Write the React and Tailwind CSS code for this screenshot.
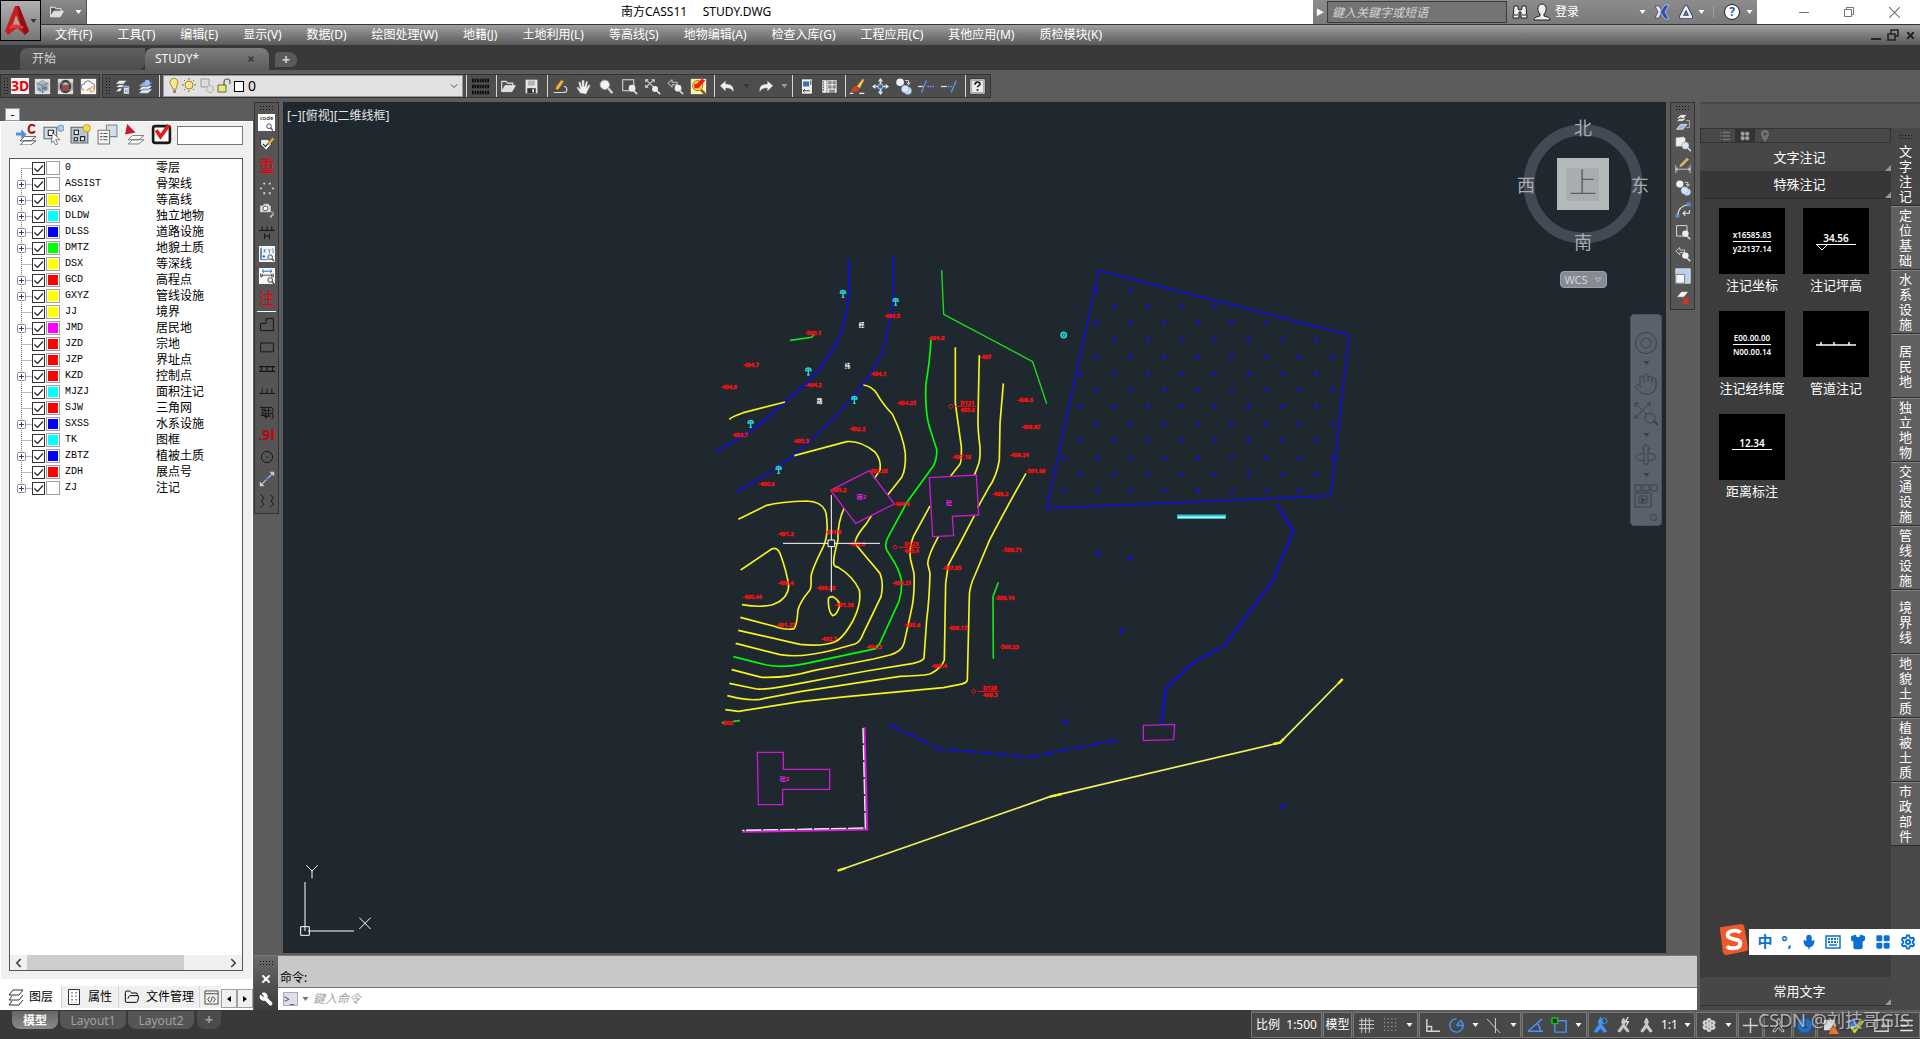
import React from 'react';
import clsx from 'clsx';
import {
  ChevronDown,
  ChevronLeft,
  ChevronRight,
  FolderOpen,
  Hand,
  LayoutGrid,
  List,
  MapPin,
  Menu,
  Mic,
  Settings,
  Shirt,
  Wrench,
  X,
} from 'lucide-react';

const menus = [
  '文件(F)', '工具(T)', '编辑(E)', '显示(V)', '数据(D)', '绘图处理(W)', '地籍(J)', '土地利用(L)',
  '等高线(S)', '地物编辑(A)', '检查入库(G)', '工程应用(C)', '其他应用(M)', '质检模块(K)',
];

const layers = [
  { code: '0', name: '零层', color: '#ffffff', open: false },
  { code: 'ASSIST', name: '骨架线', color: '#ffffff', open: true },
  { code: 'DGX', name: '等高线', color: '#ffff00', open: true },
  { code: 'DLDW', name: '独立地物', color: '#00ffff', open: true },
  { code: 'DLSS', name: '道路设施', color: '#0000ff', open: true },
  { code: 'DMTZ', name: '地貌土质', color: '#00ff00', open: true },
  { code: 'DSX', name: '等深线', color: '#ffff00', open: false },
  { code: 'GCD', name: '高程点', color: '#ff0000', open: true },
  { code: 'GXYZ', name: '管线设施', color: '#ffff00', open: true },
  { code: 'JJ', name: '境界', color: '#ffff00', open: false },
  { code: 'JMD', name: '居民地', color: '#ff00ff', open: true },
  { code: 'JZD', name: '宗地', color: '#ff0000', open: false },
  { code: 'JZP', name: '界址点', color: '#ff0000', open: false },
  { code: 'KZD', name: '控制点', color: '#ff0000', open: true },
  { code: 'MJZJ', name: '面积注记', color: '#00ffff', open: false },
  { code: 'SJW', name: '三角网', color: '#ff0000', open: false },
  { code: 'SXSS', name: '水系设施', color: '#0000ff', open: true },
  { code: 'TK', name: '图框', color: '#00ffff', open: false },
  { code: 'ZBTZ', name: '植被土质', color: '#0000ff', open: true },
  { code: 'ZDH', name: '展点号', color: '#ff0000', open: false },
  { code: 'ZJ', name: '注记', color: '#ffffff', open: true },
];

const paletteTabs = [
  '文字注记', '定位基础', '水系设施', '居民地', '独立地物', '交通设施',
  '管线设施', '境界线', '地貌土质', '植被土质', '市政部件',
];

// All drawings use a 20 x 20 box
const icons = {
  folder: (
    <>
      <path d="M2 16V4h5l2 2h6v3" fill="#555" stroke="#e8e8e8" strokeWidth="1.3" />
      <path d="M2 16L6 9h12l-4 7z" fill="#ddd" stroke="#eee" />
    </>
  ),
  save: (
    <>
      <path d="M3 2h14v16H3z" fill="#e6e6e6" />
      <path d="M6 3h8v6H6z" fill="#b5b5b5" />
      <path d="M5 12h10v6H5z" fill="#333" />
      <path d="M11 13h2v4h-2z" fill="#eee" />
    </>
  ),
  cube: (
    <>
      <path d="M1 1h18v18H1z" fill="#dde0e2" />
      <path d="M3 6l7-4 7 4v8l-7 4-7-4z" fill="#a9b6bd" />
      <path d="M3 6l7 3 7-3M10 9v9" stroke="#67757d" fill="none" />
      <path d="M5 11l3 2v3l-3-2z" fill="#4f93b7" />
      <circle cx="13" cy="12" r="2.5" fill="#738086" />
    </>
  ),
  scan: (
    <>
      <path d="M1 1h18v18H1z" fill="#dedede" />
      <ellipse cx="10" cy="10" rx="7" ry="8" fill="#444" />
      <path d="M2 6h16v8H2z" fill="none" stroke="#8d8d8d" />
      <path d="M6 8h8v6H6z" fill="#a8444c" />
      <path d="M6 8l4-3 4 3z" fill="#ccc" />
    </>
  ),
  cloud: (
    <>
      <path d="M1 1h18v18H1z" fill="#f8f8f8" />
      <path d="M5 14a3.500 3.500 0 0 1 0-7 4.500 4.500 0 0 1 8.500-1A4 4 0 0 1 16 13" fill="none" stroke="#888" strokeWidth="1.200" />
      <path d="M16 10c-3 1-5 3-4 6 3 1 6-1 5-4M11 12l-3 3" fill="none" stroke="#f0944a" strokeWidth="1.300" />
    </>
  ),
  layerProps: (
    <>
      <path d="M6 3h9l-4 4H2zM6 8h8l-4 3H2zM6 12h4l-3 4H2z" fill="#f3f3f3" stroke="#444" strokeWidth=".5" />
      <path d="M11 9h7v10h-7z" fill="#dbe6f5" stroke="#555" />
      <path d="M12 11h5M13 14h1M15 14h1M13 16h1M15 16h1" stroke="#4570b0" strokeWidth="1.200" />
    </>
  ),
  layerStack: (
    <>
      <path d="M7 13h11l-5 5H2zM7 9h11l-5 5H2z" fill="#eee" stroke="#4d678a" strokeWidth=".7" />
      <path d="M7 5h11l-5 5H2z" fill="#8fb0e4" stroke="#4d678a" strokeWidth=".7" />
      <circle cx="12" cy="5" r="3" fill="#9dc0f0" />
    </>
  ),
  linetype: (
    <path d="M0 3h20M0 10h20M0 17h20" stroke="#0a0a0a" strokeWidth="4" strokeDasharray="2 1" />
  ),
  pencil: (
    <>
      <path d="M2 17h12a3 3 0 0 0 0-7" fill="none" stroke="#ddd" strokeWidth="1.300" />
      <path d="M3 16l2-6 6-8 3 2-6 9z" fill="#f2b33c" stroke="#7a5210" strokeWidth=".6" />
      <path d="M3 16l1-3 2 1z" fill="#222" />
    </>
  ),
  hand: (
    <path d="M6 18c-1-3-4-5-4-7 1-1 3 0 4 2L4 5c1-1 2-1 3 1l1 4V3c1-1 2-1 3 0v7l2-6c1-1 2 0 2 1l-1 6 2-3c1 0 2 0 2 1l-3 6c-1 2-1 3-2 4z" fill="#efefef" stroke="#555" strokeWidth=".5" />
  ),
  zoom: (
    <>
      <path d="M12 12l5 6" stroke="#ccc" strokeWidth="3" />
      <circle cx="8" cy="8" r="5.500" fill="#f2f2f2" stroke="#aaa" />
    </>
  ),
  zoomWin: (
    <>
      <path d="M2 2h13v13H2z" fill="none" stroke="#ddd" strokeWidth="1.200" />
      <circle cx="13" cy="12" r="4" fill="#eee" />
      <path d="M15 15l4 4" stroke="#ddd" strokeWidth="2" />
    </>
  ),
  zoomExt: (
    <>
      <path d="M2 2l10 9M12 2L2 11M2 5V2h3M12 5V2H9M2 8v3h3" fill="none" stroke="#ddd" strokeWidth="1.200" />
      <circle cx="13" cy="13" r="3.500" fill="#eee" />
      <path d="M15 15l4 4" stroke="#ddd" strokeWidth="2" />
    </>
  ),
  zoomPrev: (
    <>
      <path d="M1 6l5-4v3h6v3H6v3z" fill="#555" stroke="#ddd" />
      <circle cx="13" cy="12" r="4" fill="#eee" />
      <path d="M15 15l4 4" stroke="#ddd" strokeWidth="2" />
    </>
  ),
  zoomHot: (
    <>
      <path d="M1 1h18v18H1z" fill="#fbf0c8" />
      <circle cx="9" cy="9" r="6" fill="#ffe51a" stroke="#8a6a00" />
      <path d="M13 14l5 5" stroke="#8a5a10" strokeWidth="3" />
      <path d="M5 9l9-8 4 2-8 9z" fill="#f01d1d" />
      <path d="M5 6v6h6z" fill="#f01d1d" />
    </>
  ),
  undo: <path d="M1 9l7-6v4c7 0 10 3 9 10-2-4-4-5-9-5v4z" fill="#eee" stroke="#444" strokeWidth=".5" />,
  redo: <path d="M19 9l-7-6v4C5 7 2 10 3 17c2-4 4-5 9-5v4z" fill="#eee" stroke="#444" strokeWidth=".5" />,
  page: (
    <>
      <path d="M4 1h13v18H4z" fill="#f2f2f2" stroke="#333" />
      <path d="M6 4h7v6H6z" fill="#3f6fb4" />
      <path d="M6 15h8M6 15l2-2M6 15l2 2" stroke="#222" fill="none" />
      <path d="M15 3v5" stroke="#222" />
    </>
  ),
  sheet: (
    <>
      <path d="M1 2h18v16H1z" fill="#eee" stroke="#333" />
      <path d="M3 4v12M7 2v16" stroke="#555" strokeDasharray="2 1" />
      <path d="M9 4h3v3H9zM14 4h3v3h-3zM9 9h3v3H9zM14 9h3v3h-3zM10 14h6v3h-6z" fill="#999" stroke="#444" strokeWidth=".5" />
    </>
  ),
  brush: (
    <>
      <path d="M9 10l7-9 2 1-5 10z" fill="#f7c64a" stroke="#8b5c14" strokeWidth=".5" />
      <path d="M3 16c0-4 3-7 6-6l3 3c-1 3-5 4-9 3z" fill="#d14022" />
      <path d="M1 18h4M12 18h6" stroke="#eee" strokeWidth="1.500" />
    </>
  ),
  move: (
    <>
      <path d="M10 0l3 4H7zM10 20l3-4H7zM0 10l4-3v6zM20 10l-4-3v6z" fill="#eaeaea" />
      <path d="M10 4v3M10 13v3M4 10h3M13 10h3" stroke="#eaeaea" strokeWidth="2" />
      <path d="M7.500 7.500h5v5h-5z" fill="#2e69b5" stroke="#9cc2ff" />
    </>
  ),
  copy: (
    <>
      <circle cx="6" cy="5" r="4.500" fill="#f3f3f3" />
      <circle cx="15" cy="15" r="4.500" fill="#cfe3fa" stroke="#6a96cd" strokeWidth=".6" />
      <circle cx="12" cy="13" r="4.500" fill="#d8e7fa" stroke="#6a96cd" strokeWidth=".6" />
      <path d="M12 3h4v4M14 5l2 3 2-3" fill="none" stroke="#eee" />
    </>
  ),
  trim: (
    <>
      <path d="M0 10h6" stroke="#ddd" strokeWidth="1.500" />
      <path d="M4 17L10 3" stroke="#5b97ee" strokeWidth="1.500" />
      <path d="M11 10h9" stroke="#5b97ee" strokeWidth="1.500" strokeDasharray="2 1" />
    </>
  ),
  extend: (
    <>
      <path d="M0 10h7" stroke="#ddd" strokeWidth="1.500" />
      <path d="M8 10h5" stroke="#5b97ee" strokeWidth="1.500" strokeDasharray="2 1" />
      <path d="M12 17l6-14" stroke="#5b97ee" strokeWidth="1.500" />
    </>
  ),
  help: (
    <>
      <path d="M1 1h18v18H1z" fill="#eee" stroke="#222" />
      <path d="M3 3h14v14H3z" fill="none" stroke="#999" />
      <path d="M7 8c0-4 6-4 6-1 0 2-3 2-3 4M10 13v2" stroke="#222" strokeWidth="2" fill="none" />
    </>
  ),
  lens: (
    <>
      <circle cx="10" cy="8" r="6" fill="#e4f0ff" stroke="#345" strokeWidth="2" />
      <path d="M14 12l6 7" stroke="#345" strokeWidth="3" />
    </>
  ),
  tagEdit: (
    <>
      <path d="M2 4h9l5 6-7 8-7-7z" fill="#eee" stroke="#222" />
      <path d="M5 10l3 3 5-5" stroke="#333" fill="none" strokeWidth="1.500" />
      <path d="M11 9l6-7 2 2-6 7z" fill="#f3b33a" stroke="#7a5210" strokeWidth=".5" />
    </>
  ),
  dots: (
    <path d="M5 3h3v3H5zM12 3h3v3h-3zM1 9h3v3H1zM16 9h3v3h-3zM5 15h3v3H5zM12 15h3v3h-3z" fill="#ddd" stroke="#444" strokeWidth=".6" />
  ),
  camera: (
    <>
      <path d="M1 4h4l1-2h6l1 2h2v9H1z" fill="#ddd" stroke="#333" strokeWidth=".6" />
      <circle cx="8" cy="8" r="3" fill="#fff" stroke="#333" />
      <path d="M15 12c4 0 4 6-1 6M16 16l-2 2 2 2" fill="none" stroke="#ddd" strokeWidth="1.200" />
    </>
  ),
  wires: <path d="M0 8h20M4 3v5M10 3v5M16 3v5M7 12v7M13 12v7M7 15h6" stroke="#111" strokeWidth="1.200" fill="none" />,
  xyFind: (
    <>
      <path d="M0 0h20v20H0z" fill="#f7f7f7" />
      <path d="M2 3v14h9M3 17V2M6 4l2 4M8 4L6 8M11 4l2 2 2-2M13 6v3M17 3l1 3-1 3" stroke="#2568b8" fill="none" />
      <circle cx="6" cy="13" r="1.500" fill="#2568b8" />
      <circle cx="14" cy="14" r="3" fill="#d8e8fb" stroke="#333" />
      <path d="M16 16l3 3" stroke="#333" strokeWidth="1.500" />
    </>
  ),
  distFind: (
    <>
      <path d="M0 0h20v20H0z" fill="#f7f7f7" />
      <path d="M4 4h12M6 2L4 4l2 2M14 2l2 2-2 2" stroke="#2568b8" fill="none" strokeWidth="1.200" />
      <path d="M3 9h14M2 7v4h2V7M16 7v4h2V7" stroke="#333" fill="none" />
      <circle cx="14" cy="15" r="3" fill="#d8e8fb" stroke="#333" />
      <path d="M16 17l3 3" stroke="#333" strokeWidth="1.500" />
    </>
  ),
  poly: <path d="M2 8h7V2h9v15H2z" stroke="#151515" strokeWidth="1.200" fill="none" />,
  rect: <path d="M2 5h16v11H2z" stroke="#151515" strokeWidth="1.200" fill="none" />,
  bridge: <path d="M0 7h20M0 13h20M3 7v6M10 7v6M17 7v6" stroke="#151515" strokeWidth="1.400" fill="none" />,
  fence: <path d="M0 13h20M4 7v6M10 7v6M16 7v6" stroke="#151515" strokeWidth="1.200" fill="none" />,
  slope: <path d="M1 3h15l2 4-2 3 2 4-2 4M3 3l3 3H3l3 4H3l4 3H2M7 3l2 14M12 3v10l-4 3M6 7h9M7 11h9M6 14h9" stroke="#151515" fill="none" strokeWidth="1.200" />,
  circle: (
    <>
      <circle cx="10" cy="10" r="7" fill="none" stroke="#151515" strokeWidth="1.200" />
      <circle cx="10" cy="10" r="1" fill="#151515" />
    </>
  ),
  stretch: (
    <>
      <path d="M3 17L17 3" stroke="#ccc" strokeWidth="1.300" />
      <path d="M1 19v-6l6 6zM19 1v6l-6-6z" fill="#ccc" />
      <circle cx="10" cy="10" r="2" fill="#3c7fe0" />
    </>
  ),
  waves: <path d="M2 2l4 4-3 4 3 4-4 4M14 2l4 4-3 4 3 4-4 4" stroke="#151515" fill="none" strokeWidth="1.200" />,
  layerPrev: (
    <>
      <path d="M7 1h8l-5 5H2zM7 4l-5 5h8l3-3" fill="#f5f5f5" stroke="#333" strokeWidth=".6" />
      <path d="M7 13h8l-5 6H2z" fill="#9db6ee" stroke="#eee" />
      <path d="M14 8h4v9h-4" stroke="#ccc" fill="none" />
    </>
  ),
  viewFind: (
    <>
      <path d="M1 2l10-1 2 2v10H1z" fill="#eee" stroke="#777" strokeWidth=".6" />
      <circle cx="13" cy="12" r="4.500" fill="#e0e6ea" stroke="#888" strokeWidth=".7" />
      <path d="M16 15l4 4" stroke="#ddd" strokeWidth="2" />
    </>
  ),
  dimEdit: (
    <>
      <path d="M1 9v10M19 9v10M1 14h18M4 12l-3 2 3 2M16 12l3 2-3 2" stroke="#ddd" fill="none" />
      <path d="M6 11l1-3 8-8 2 2-8 8z" fill="#f0a92c" stroke="#fff" strokeWidth=".4" />
    </>
  ),
  arc: (
    <>
      <path d="M3 17C4 8 9 4 17 3" stroke="#ddd" strokeWidth="1.300" fill="none" />
      <path d="M1 16h4v3H1zM15 1h4v4h-4z" fill="#3c7fe0" stroke="#9cc2ff" strokeWidth=".5" />
      <path d="M18 10v4h-8M13 11l-3 3 3 3" stroke="#eee" strokeWidth="1.300" fill="none" />
    </>
  ),
  scale: (
    <>
      <path d="M1 1h18v18H1z" fill="#b9d0ef" stroke="#eee" />
      <path d="M1 8h11v11H1z" fill="#f5f5f5" stroke="#667" />
    </>
  ),
  layerDel: (
    <>
      <path d="M8 2h9l-6 7H2z" fill="#f5f5f5" stroke="#333" strokeWidth=".6" />
      <path d="M10 10l7 8M17 10l-7 8" stroke="#e5301c" strokeWidth="2.500" />
    </>
  ),
  layerC: (
    <>
      <path d="M8 12h11l-5 4H4zM8 16h11l-5 4H4z" fill="#fff" stroke="#444" strokeWidth=".8" />
      <path d="M0 8h5V5l5 5-5 4v-3H0z" fill="#4e8fdd" />
      <path d="M18 2c-4-3-6 0-6 3s3 5 6 2" stroke="#a80f12" strokeWidth="2" fill="none" />
    </>
  ),
  pickBulb: (
    <>
      <path d="M1 3h12v11H1z" fill="#cfe0ea" stroke="#667" />
      <path d="M5 6h5v5H5z" fill="#fff" stroke="#222" />
      <path d="M9 8l7 7-4 0 2 4-2 1-2-4-2 2z" fill="#fff" stroke="#555" strokeWidth=".7" />
      <circle cx="17" cy="4" r="3" fill="#a9d0f0" stroke="#679" strokeWidth=".7" />
    </>
  ),
  gridBulb: (
    <>
      <path d="M1 3h16v15H1z" fill="#b9c6cd" stroke="#567" />
      <path d="M4 6h4v4H4zM4 13h3v3H4zM10 12h4v4h-4z" fill="#eee" stroke="#222" />
      <circle cx="16" cy="4" r="3.500" fill="#ffd84a" stroke="#b98b10" strokeWidth=".7" />
    </>
  ),
  propList: (
    <>
      <path d="M9 1h10v11H9z" fill="#cfe0ea" stroke="#789" />
      <path d="M1 6h11v13H1z" fill="#f4f4f4" stroke="#777" />
      <path d="M3 9h2M6 9h4M3 12h2M6 12h4M3 15h2M6 15h4" stroke="#555" />
    </>
  ),
  layerRed: (
    <>
      <path d="M8 11h11l-5 4H4zM8 15h11l-5 4H4z" fill="#fff" stroke="#666" strokeWidth=".8" />
      <path d="M3 0l8 8-10 2z" fill="#c31c24" />
    </>
  ),
  redCheck: (
    <>
      <rect x="2" y="2" width="16" height="16" rx="2" fill="#fff" stroke="#1a1a1a" strokeWidth="2.500" />
      <path d="M5 6l4 6 8-11" stroke="#e51c1c" strokeWidth="3.500" fill="none" />
    </>
  ),
};

function Icon({ name, className = 'h-4 w-4' }) {
  return (
    <svg viewBox="0 0 20 20" className={clsx('shrink-0', className)} aria-hidden="true">
      {icons[name]}
    </svg>
  );
}

function ToolButton({ name, label }) {
  return (
    <button className="flex w-[23px] shrink-0 items-center justify-center" aria-label={label || name}>
      <Icon name={name} className="h-[17px] w-[17px]" />
    </button>
  );
}

function Caret({ className = 'text-white' }) {
  return (
    <svg viewBox="0 0 6 4" className={clsx('h-1 w-[7px] shrink-0', className)} aria-hidden="true">
      <path d="M0 0h6L3 4z" fill="currentColor" />
    </svg>
  );
}

function Sep() {
  return <span className="h-[22px] w-px shrink-0 bg-neutral-300" />;
}

function Grip({ vertical }) {
  return (
    <span
      className={clsx(
        'shrink-0 bg-[radial-gradient(#111_1px,transparent_1px)] bg-[length:3px_3px]',
        vertical ? 'my-1 h-[18px] w-[6px]' : 'mx-auto h-[6px] w-[15px]'
      )}
    />
  );
}

function Header() {
  return (
    <header className="flex h-[45px] shrink-0 bg-[#5a5a5a]">
      <button className="flex h-[41px] w-[41px] shrink-0 items-center justify-between border border-black bg-linear-to-b from-[#b0b0b0] to-[#777] px-[3px]" aria-label="菜单">
        <svg viewBox="0 0 26 30" className="h-[30px] w-[26px]">
          <path d="M11 0h4l10 25-4 4-8-7-9 7-3-4z" fill="#c81e22" />
          <path d="M13 0h2l10 25-4 4-4-8z" fill="#8f1014" />
          <path d="M12 9l-4 12h9z" fill="#b3a0a0" />
          <path d="M6 20c5-2 9-2 14 1l-2 2c-4-2-8-2-12 1z" fill="#e23a3a" />
        </svg>
        <Caret className="text-[#333]" />
      </button>
      <div className="flex min-w-0 flex-1 flex-col">
        <div className="flex h-6 items-stretch bg-white text-xs leading-6">
          <div className="flex w-[46px] items-center justify-between border-r border-[#555] bg-linear-to-b from-[#8a8a8a] to-[#6e6e6e] pr-1 pl-2">
            <Icon name="folder" />
            <Caret />
          </div>
          <h1 className="flex-1 pl-[534px] whitespace-pre text-black">南方CASS11{'     '}STUDY.DWG</h1>
          <div className="flex items-center bg-linear-to-b from-[#8c8c8c] to-[#7a7a7a] text-white">
            <span className="flex w-[14px] justify-center text-[8px]">▶</span>
            <input
              aria-label="搜索"
              placeholder="鍵入关鍵字或短语"
              className="h-[22px] w-[180px] border border-[#3b3b3b] bg-[#747474] px-1 text-xs italic placeholder:text-neutral-300"
            />
            <svg viewBox="0 0 18 18" className="ml-1 h-[18px] w-[18px]">
              <path d="M3 3h4v3l1 1h2l1-1V3h4l1 12h-6V9H8v6H2z" fill="#eee" stroke="#222" />
              <path d="M3 12h4M11 12h4" stroke="#222" />
            </svg>
            <svg viewBox="0 0 18 18" className="ml-1 h-[18px] w-[18px]">
              <path d="M1 17c0-3 3-3 6-4v-2C3 7 5 1 9 1s6 6 2 10v2c3 1 6 1 6 4z" fill="#eee" stroke="#222" />
            </svg>
            <button className="ml-1 w-[84px] text-left">登录</button>
            <Caret />
            <svg viewBox="0 0 16 16" className="ml-2 h-4 w-4">
              <path d="M1 2h4l3 5-3 7H1l3-6z" fill="#dfe7ff" stroke="#223" strokeWidth=".6" />
              <path d="M15 1h-4L6 8l5 7h4l-4-7z" fill="#2d4fc0" stroke="#dfe7ff" strokeWidth=".6" />
            </svg>
            <svg viewBox="0 0 16 16" className="ml-2 h-4 w-4">
              <path d="M8 3L3 13h10z" fill="none" stroke="#223a70" strokeWidth="4" strokeLinejoin="round" />
              <path d="M8 3L3 13h10z" fill="none" stroke="#eee" strokeWidth="2.500" strokeLinejoin="round" />
            </svg>
            <Caret className="ml-1 text-white" />
            <span className="ml-2 h-3 w-px bg-neutral-400" />
            <span className="mr-[6px] ml-[10px] flex h-4 w-4 items-center justify-center rounded-full border border-[#222] bg-white text-xs font-bold text-[#2459b5]">?</span>
            <Caret className="mr-1 text-white" />
          </div>
          <div className="flex w-[163px] shrink-0 items-center justify-between pr-5 pl-[42px] text-neutral-500">
            <button aria-label="最小化" className="h-px w-[10px] bg-neutral-500" />
            <button aria-label="还原">
              <svg viewBox="0 0 10 10" className="h-[10px] w-[10px]">
                <path d="M.5 2.500h7v7h-7zM2.500 2.500v-2h7v7h-2" fill="none" stroke="currentColor" />
              </svg>
            </button>
            <button aria-label="关闭">
              <svg viewBox="0 0 10 10" className="h-[11px] w-[11px]">
                <path d="M0 0l10 10M10 0L0 10" stroke="currentColor" />
              </svg>
            </button>
          </div>
        </div>
        <div className="flex h-[21px] items-center border-t border-[#333] bg-linear-to-b from-[#a0a0a0] to-[#5a5a5a]">
          <nav className="flex flex-1 gap-[25px] pl-[14px] text-xs leading-5 whitespace-nowrap text-white">
            {menus.map((m) => (
              <button key={m}>{m}</button>
            ))}
          </nav>
          <div className="flex items-center gap-[6px] pr-1 text-[#222]">
            <button aria-label="最小化图形" className="mt-2 h-[2px] w-[10px] bg-[#222]" />
            <button aria-label="还原图形">
              <svg viewBox="0 0 12 12" className="h-3 w-3">
                <path d="M1 5h7v6H1zM4 5V1h7v6H8" fill="none" stroke="currentColor" strokeWidth="1.500" />
              </svg>
            </button>
            <button aria-label="关闭图形">
              <X className="h-[11px] w-[11px]" strokeWidth={4} />
            </button>
          </div>
        </div>
      </div>
    </header>
  );
}

function FileTabs() {
  return (
    <div className="flex h-[25px] shrink-0 items-end bg-[#393939] pl-5 text-xs leading-[22px]">
      <button className="h-[22px] w-[125px] rounded-tl-lg rounded-br-lg bg-linear-to-b from-[#5f5f5f] to-[#4c4c4c] pl-3 text-left text-neutral-300">开始</button>
      <button className="flex h-[22px] w-[124px] items-center justify-between rounded-t-lg bg-linear-to-b from-[#7e7e7e] to-[#5c5c5c] pr-[14px] pl-[10px] text-neutral-100">
        STUDY*
        <X className="h-2 w-2 text-[#333]" strokeWidth={4} />
      </button>
      <button className="mb-[3px] ml-[6px] h-[15px] w-[22px] rounded-tl-sm rounded-tr-lg rounded-br-md bg-[#5a5a5a] text-sm leading-[15px] font-bold text-neutral-300">+</button>
    </div>
  );
}

function TopToolbar() {
  return (
    <div className="flex h-8 shrink-0 items-center gap-[2px] bg-[#5c5c5c]">
      <div className="flex h-6 w-[100px] items-center border border-[#333] bg-[#4d4d4d] pl-[2px]">
        <Grip vertical />
        <button className="mx-[2px] flex h-4 w-[19px] items-center justify-center bg-neutral-100 text-sm leading-4 font-bold text-red-600">3D</button>
        <ToolButton name="cube" />
        <ToolButton name="scan" />
        <ToolButton name="cloud" />
      </div>
      <div className="flex h-6 items-center border border-[#333] bg-[#4d4d4d] pr-px pl-[2px]">
        <Grip vertical />
        <ToolButton name="layerProps" />
        <ToolButton name="layerStack" />
        <span className="w-[2px]" />
        <Sep />
        <label className="mx-[3px] flex h-[22px] w-[300px] items-center border border-[#999] bg-[#e1e1e1] pl-1 text-xs">
          <svg viewBox="0 0 66 18" className="h-[18px] w-[66px] shrink-0">
            <path d="M3 8a4 4 0 1 1 6 0l-1 4H5z" fill="#ffe68a" stroke="#8d741f" strokeWidth=".8" />
            <path d="M5 13h3v3H5z" fill="#8a8a8a" />
            <circle cx="21" cy="8" r="4" fill="#ffe68a" stroke="#8d741f" strokeWidth=".8" />
            <path d="M21 1v2M21 13v2M14 8h2M26 8h2M16 3l1 1M26 3l-1 1M16 13l1-1M26 13l-1-1" stroke="#8d741f" />
            <path d="M33 2h8v8h-8z" fill="#ddd" stroke="#999" />
            <circle cx="42" cy="12" r="3.500" fill="#ddd" stroke="#999" strokeDasharray="2 1" />
            <path d="M50 8h8v7h-8z" fill="#e9e980" stroke="#686826" />
            <path d="M56 8V5a3 3 0 0 1 6 0v2" fill="none" stroke="#555" strokeWidth="1.200" />
          </svg>
          <span className="h-[11px] w-[10px] shrink-0 border border-black bg-white" />
          <select aria-label="图层" className="ml-1 h-5 flex-1 appearance-none bg-transparent text-sm text-black" defaultValue="0">
            <option>0</option>
          </select>
          <ChevronDown className="mr-[2px] h-3 w-3 text-neutral-600" />
        </label>
        <Sep />
        <span className="w-[2px]" />
        <ToolButton name="linetype" />
        <span className="w-1" />
        <Sep />
        <ToolButton name="folder" />
        <ToolButton name="save" />
        <span className="w-1" />
        <Sep />
        <span className="w-px" />
        <ToolButton name="pencil" />
        <ToolButton name="hand" />
        <ToolButton name="zoom" />
        <ToolButton name="zoomWin" />
        <ToolButton name="zoomExt" />
        <ToolButton name="zoomPrev" />
        <ToolButton name="zoomHot" />
        <span className="w-1" />
        <Sep />
        <span className="w-px" />
        <ToolButton name="undo" />
        <Caret className="mx-1 text-[#333]" />
        <ToolButton name="redo" />
        <Caret className="mx-1 text-[#999]" />
        <Sep />
        <span className="w-[2px]" />
        <ToolButton name="page" />
        <ToolButton name="sheet" />
        <span className="w-1" />
        <Sep />
        <ToolButton name="brush" />
        <ToolButton name="move" />
        <ToolButton name="copy" />
        <ToolButton name="trim" />
        <ToolButton name="extend" />
        <span className="w-1" />
        <Sep />
        <ToolButton name="help" />
      </div>
    </div>
  );
}

function LayerRow({ layer, last, first }) {
  return (
    <li>
      <label className="flex h-4 items-center">
        <svg viewBox="0 0 22 16" className="h-4 w-[22px] shrink-0" aria-hidden="true">
          <path
            d={clsx('M11.5 8.5H22', !first && 'M11.5 0V8', !last && 'M11.5 8V16')}
            stroke="#777"
            strokeDasharray="1 1"
            fill="none"
          />
          {layer.open && (
            <>
              <rect x="7.500" y="4.500" width="8" height="8" rx="1" fill="#fff" stroke="#8b8b8b" />
              <path d="M9 8.500h5M11.500 6v5" stroke="#2b3f88" />
            </>
          )}
        </svg>
        <span className="relative h-[13px] w-[13px] shrink-0">
          <input type="checkbox" defaultChecked className="block h-[13px] w-[13px] appearance-none border border-[#333] bg-white" />
          <svg viewBox="0 0 13 13" className="pointer-events-none absolute inset-0">
            <path d="M2.500 6.500l3 3 5.500-6" stroke="#222" fill="none" strokeWidth="1.200" />
          </svg>
        </span>
        <span className="ml-px flex h-[14px] w-[14px] shrink-0 border border-[#a0a0a0] p-px">
          <span className="flex-1" style={{ backgroundColor: layer.color }} />
        </span>
        <span className="ml-[5px] w-[91px] text-[10px] [font-family:'Liberation_Mono',monospace]">{layer.code}</span>
        <span>{layer.name}</span>
      </label>
    </li>
  );
}

function LayerPanel() {
  return (
    <aside className="flex w-[253px] shrink-0 flex-col text-xs text-black">
      <div className="flex h-[19px] items-end pl-[5px]">
        <button className="h-[13px] w-[15px] border border-[#999] bg-neutral-100 text-xs leading-[10px]">-</button>
      </div>
      <div className="flex min-h-0 flex-1 flex-col border border-white bg-[#f0f0f0] pr-[9px] pb-2 pl-2">
        <div className="flex h-9 items-start gap-[5px] pt-[2px] pl-[6px]">
          {['layerC', 'pickBulb', 'gridBulb', 'propList', 'layerRed', 'redCheck'].map((n) => (
            <button key={n} aria-label={n} className="flex w-[22px] shrink-0 justify-center">
              <Icon name={n} className="h-[21px] w-[21px]" />
            </button>
          ))}
          <input aria-label="查找图层" className="mt-[2px] h-[19px] min-w-0 flex-1 border border-[#777] bg-white px-1" />
        </div>
        <div className="flex min-h-0 flex-1 flex-col border border-[#555] bg-white">
          <ul className="flex-1 pt-px leading-4">
            {layers.map((l, i) => (
              <LayerRow key={l.code} layer={l} first={i === 0} last={i === layers.length - 1} />
            ))}
          </ul>
          <div className="flex h-[15px] items-center bg-[#f0f0f0]">
            <ChevronLeft className="h-[14px] w-[17px] text-[#444]" strokeWidth={3} />
            <span className="h-full w-[157px] bg-[#cdcdcd]" />
            <span className="flex-1" />
            <ChevronRight className="h-[14px] w-[17px] text-[#444]" strokeWidth={3} />
          </div>
        </div>
      </div>
      <div className="flex h-[30px] shrink-0 items-end bg-white pb-[2px] text-xs leading-[22px]">
        <button className="flex h-[22px] w-[61px] items-center justify-between pr-2 pl-2">
          <svg viewBox="0 0 16 18" className="h-[18px] w-4">
            <path d="M5 2h10l-4 5H1zM1 12h10l4-5M1 17h10l4-5M1 12l3-4M1 17l3-4" fill="none" stroke="#333" />
          </svg>
          图层
        </button>
        <button className="flex h-[22px] w-[57px] items-center justify-between border-l border-neutral-300 bg-[#f0f0f0] pr-[6px] pl-[6px]">
          <svg viewBox="0 0 12 16" className="h-4 w-3">
            <path d="M.5.500h11v15H.5z" fill="#fff" stroke="#333" />
            <path d="M4 3v11M8 3v11" stroke="#777" strokeWidth="1.500" strokeDasharray="1.500 2" />
          </svg>
          属性
        </button>
        <button className="flex h-[22px] w-[81px] items-center justify-between border-l border-neutral-300 bg-[#f0f0f0] px-[5px] whitespace-nowrap">
          <FolderOpen className="h-4 w-4" strokeWidth={1.5} />
          文件管理
        </button>
        <button aria-label="代码" className="flex h-[22px] flex-1 items-center border-l border-neutral-300 bg-[#f0f0f0] pl-1">
          <svg viewBox="0 0 16 16" className="h-[15px] w-[15px]">
            <path d="M1 1h14v14H1zM1 4h14M6 7l-2 3 2 3M10 7l2 3-2 3M9 7l-2 6" fill="none" stroke="#444" />
          </svg>
        </button>
        <button aria-label="向左" className="flex h-[19px] w-4 items-center justify-center border border-neutral-400 bg-[#f0f0f0]">
          <svg viewBox="0 0 4 6" className="h-[6px] w-1"><path d="M4 0v6L0 3z" /></svg>
        </button>
        <button aria-label="向右" className="flex h-[19px] w-4 items-center justify-center border border-neutral-400 bg-[#f0f0f0]">
          <svg viewBox="0 0 4 6" className="h-[6px] w-1"><path d="M0 0v6l4-3z" /></svg>
        </button>
      </div>
    </aside>
  );
}

function SideTool({ children, label }) {
  return (
    <button aria-label={label} className="flex h-[22px] shrink-0 items-center justify-center">
      {children}
    </button>
  );
}

function LeftToolbar() {
  return (
    <div className="flex w-[25px] flex-col self-start border border-[#333] bg-[#555] pt-[2px] pb-px">
      <Grip />
      <SideTool label="code">
        <span className="flex w-[17px] flex-col items-center bg-white">
          <span className="text-[6px] leading-[9px] text-black">code</span>
          <Icon name="lens" className="ml-1 h-2 w-2" />
        </span>
      </SideTool>
      <SideTool label="编辑"><Icon name="tagEdit" /></SideTool>
      <SideTool label="重"><span className="text-base leading-[22px] text-red-600">重</span></SideTool>
      <SideTool label="点"><Icon name="dots" /></SideTool>
      {['camera', 'wires', 'xyFind', 'distFind'].map((n) => (
        <SideTool key={n} label={n}><Icon name={n} /></SideTool>
      ))}
      <SideTool label="注"><span className="text-base leading-[22px] text-red-600">注</span></SideTool>
      <span className="mx-[2px] my-[2px] h-px bg-white" />
      {['poly', 'rect', 'bridge', 'fence', 'slope'].map((n) => (
        <SideTool key={n} label={n}><Icon name={n} /></SideTool>
      ))}
      <SideTool label="高程"><span className="text-sm leading-[22px] font-bold text-red-700">.9l</span></SideTool>
      {['circle', 'stretch', 'waves'].map((n) => (
        <SideTool key={n} label={n}><Icon name={n} /></SideTool>
      ))}
    </div>
  );
}

function RightToolbar() {
  return (
    <div className="mr-[2px] ml-1 flex w-[25px] flex-col self-start border border-[#333] bg-[#555] pt-[2px]">
      <Grip />
      {['layerPrev', 'viewFind', 'dimEdit', 'copy', 'arc', 'zoomWin', 'zoomPrev', 'scale', 'layerDel'].map((n) => (
        <SideTool key={n} label={n}><Icon name={n} /></SideTool>
      ))}
    </div>
  );
}

const contours = [
  'M88 508Q95 500 130 488L255 456',
  'M283 617L440 575Q480 570 525 606Q545 630 540 660L523 686',
  'M490 405Q515 408 530 430Q550 465 577 492Q610 560 616 610Q618 660 605 682L563 735',
  'M766 292V460L784 590Q785 640 778 645L752 678',
  'M838 316L834 500Q833 540 840 590Q842 630 833 650L823 676',
  'M910 400L900 520L898 630Q890 680 865 715L833 773',
  'M978 670Q910 790 868 872L825 975Q808 1010 808 1040L802 1290Q800 1300 780 1303L730 1313L440 1340L300 1355L115 1384L76 1379',
  'M823 797L785 870L745 945L737 1000L733 1230Q725 1255 690 1272Q660 1278 600 1279L300 1325L180 1348Q140 1353 82 1337',
  'M715 860Q685 915 683 940L690 970Q688 1050 680 1110L672 1225Q665 1235 640 1240L500 1263L300 1300Q200 1320 170 1317L88 1300',
  'M690 768L640 860Q625 895 632 930L642 970Q645 1040 632 1090L612 1180Q605 1205 570 1215L520 1227L340 1262Q260 1285 185 1282L95 1259',
  'M515 796L500 820Q465 860 465 880Q480 900 540 970Q552 1000 543 1040L490 1150Q480 1178 465 1182L400 1200Q300 1225 240 1214L107 1180',
  'M432 775Q412 820 414 870Q400 920 401 940Q402 950 415 952Q460 980 478 1020Q485 1060 460 1110Q430 1165 405 1175Q370 1190 300 1183L115 1141',
  'M115 808L200 766Q240 755 320 753Q370 755 378 790Q388 850 370 890Q335 960 333 980Q335 1015 328 1022Q300 1055 294 1080Q290 1130 282 1136Q260 1142 220 1128L121 1102',
  'M122 960L215 897Q232 890 240 910Q262 970 266 1010Q262 1050 215 1065Q180 1073 126 1064',
  'M385 1052Q383 1040 398 1040Q420 1050 418 1070Q410 1095 398 1097Q385 1085 385 1052Z',
];

const heights = [
  [551, 203, '494.5'], [315, 254, '500.1'], [128, 352, '494.7'], [62, 417, '494.6'], [316, 410, '494.2'],
  [510, 379, '494.1'], [684, 269, '494.9'], [840, 326, '497'], [590, 464, '494.25'], [447, 543, '492.2'],
  [95, 561, '493.7'], [278, 578, '495.3'], [505, 669, '492.28'], [175, 709, '490.9'], [390, 727, '495.2'],
  [232, 858, '491.2'], [375, 851, '491.9'], [446, 887, '492.6'], [580, 768, '494.4'], [755, 627, '497.18'],
  [950, 456, '498.6'], [963, 538, '498.87'], [928, 621, '499.24'], [978, 669, '501.98'], [876, 737, '499.2'],
  [907, 906, '500.71'], [726, 961, '497.85'], [232, 1005, '490.4'], [127, 1047, '490.44'], [348, 1020, '490.93'],
  [403, 1072, '491.36'], [576, 1004, '494.21'], [228, 1132, '491.27'], [362, 1173, '492.7'], [497, 1196, '494.3'],
  [612, 1132, '495.6'], [743, 1140, '498.17'], [692, 1253, '497.4'], [885, 1050, '500.14'], [898, 1198, '500.23'],
  [65, 1425, '500'],
];

const controls = [
  { x: 753, y: 469, id: 'D121', h: '493.8' },
  { x: 585, y: 892, id: 'D123', h: '495.4' },
  { x: 821, y: 1324, id: 'D128', h: '499.3' },
];

// [y, first x, count], marks stand 101 apart
const grassRows = [
  [118, 1190, 2], [168, 1241, 4], [217, 1190, 6], [269, 1241, 7], [320, 1190, 8], [370, 1140, 8], [420, 1190, 8],
  [469, 1140, 8], [521, 1190, 8], [572, 1140, 8], [623, 1090, 9], [672, 1140, 8], [722, 1090, 8],
];

const lamps = [[429, 130], [587, 154], [325, 363], [463, 448], [152, 520], [236, 658]];

function Drawing() {
  return (
    <svg viewBox="-1251 -444 4149 2553" className="absolute inset-0 h-full w-full" fill="none" strokeWidth="5">
      <g stroke="#1010d0">
        <path d="M446 30L447 120Q440 210 410 280Q375 340 320 400L255 455Q200 505 150 545L45 606" strokeWidth="6" />
        <path d="M579 20V140Q572 230 545 310Q510 385 450 450Q380 530 283 615L215 665L107 725" strokeWidth="5" />
        <path d="M565 1423L640 1458L715 1497L860 1508L990 1522L1080 1502L1262 1469" strokeWidth="6" strokeDasharray="40 8" />
        <path d="M1730 762L1780 845L1730 960L1720 990L1573 1187L1480 1237L1398 1315L1383 1422" strokeWidth="7" />
        <path d="M1196 62L1947 255L1893 737L1040 775Z" strokeWidth="5" />
      </g>
      {grassRows.map(([y, x, n]) =>
        Array.from({ length: n }, (_, i) => (
          <path key={`${y}-${i}`} d={`M${x + i * 101 - 6} ${y + 3}h9v-10m-6 7h7`} stroke="#1414d8" />
        ))
      )}
      {[[1195, 912], [1290, 925], [1265, 1143], [1095, 1415], [1748, 1670]].map(([x, y]) => (
        <ellipse key={x} cx={x} cy={y} rx="6" ry="8" fill="#1010d0" />
      ))}

      <g stroke="#18e018">
        <path d="M725 60L731 193L998 335L1040 461" strokeWidth="4" />
        <path d="M270 271L335 262L342 255M895 997L879 1040L880 1226M65 1418h10M100 1414L120 1412" />
        <path d="M693 268Q690 330 678 400Q674 480 688 530L710 598Q712 625 700 648L622 755L565 860Q553 880 560 900L585 940Q604 975 605 1000Q605 1030 597 1054L537 1185M100 1220L200 1245Q250 1255 320 1240L527 1196L540 1180" stroke="#00ff00" />
      </g>

      <g stroke="#f4f41c">
        {contours.map((d) => (
          <path key={d} d={d} />
        ))}
        <path d="M413 1862L1050 1640L1740 1478L1928 1287" stroke="#f0f060" />
        <path d="M413 1862l25-8M1050 1640l35-8M1720 1482l20-4 12-12M1915 1300l13-13" strokeWidth="7" />
      </g>

      <g stroke="#c81ad0" strokeWidth="4">
        <path d="M392 721L508 662L583 762L467 820Z" />
        <path d="M688 683L829 675L836 795L757 799L761 857L698 860Z" />
        <path d="M172 1507H250V1558H389V1618H248V1664H175Z" />
        <path d="M1330 1426L1424 1423L1421 1469L1330 1472Z" />
      </g>
      <path d="M493 1432L501 1738L127 1745" stroke="#d020d8" strokeWidth="7" />
      <path d="M489 1434L496 1734L127 1741" stroke="#f2f2f2" strokeWidth="4" strokeDasharray="46 5" />

      <g stroke="#20d8d8">
        {lamps.map(([x, y]) => (
          <path key={x} d={`M${x - 8} ${y - 1}q0-8 8-8t8 8zM${x} ${y - 8}v20M${x - 4} ${y + 12}h8`} strokeWidth="4" />
        ))}
        <circle cx="1091" cy="255" r="8" />
        <path d="M1087 255h8M1091 251v8" strokeWidth="3" />
        <path d="M1431 800h147" stroke="#20c8d0" strokeWidth="13" />
        <path d="M1434 802h141" stroke="#a8ffff" strokeWidth="5" />
      </g>

      <g fill="#ff1010" stroke="#ff1010" strokeWidth="1" fontSize="17" fontWeight="bold">
        {heights.map(([x, y, t]) => (
          <text key={`${x}-${y}`} x={x} y={y}>·{t}</text>
        ))}
        {controls.map((c) => (
          <g key={c.id}>
            <path d={`M${c.x - 7} ${c.y}l7-7 7 7-7 7zM${c.x + 12} ${c.y}h63`} strokeWidth="3" fill="none" />
            <text x={c.x + 28} y={c.y - 3}>{c.id}</text>
            <text x={c.x + 28} y={c.y + 18}>{c.h}</text>
          </g>
        ))}
      </g>
      <g fill="#f020f0" fontSize="18" fontWeight="bold">
        <text x="470" y="748">砖2</text>
        <text x="738" y="764">砼</text>
        <text x="239" y="1592">砼2</text>
      </g>
      <g fill="#ffffff" fontSize="17" fontWeight="bold">
        <text x="476" y="231">经</text>
        <text x="434" y="353">纬</text>
        <text x="350" y="460">路</text>
      </g>

      <g stroke="#ffffff" strokeWidth="3">
        <path d="M249 880H384M404 880H540M394 735V870M394 890V1025M384 870h20v20h-20z" />
        <path d="M-1185 2043V1896M-1176 2043H-1038M-1198 2030h26v26h-26z" />
        <path d="M-1181 1846l17 17 17-17M-1164 1863v22M-1022 2003l34 34M-988 2003l-34 34" />
      </g>
    </svg>
  );
}

function ViewCube() {
  return (
    <div className="absolute top-[11px] right-[12px] flex w-[142px] flex-col items-center">
      <svg viewBox="0 0 142 142" className="h-[142px] w-[142px]">
        <circle cx="71" cy="71" r="54" fill="none" stroke="#434a54" strokeWidth="11" />
        <rect x="45" y="45" width="52" height="52" fill="#b4b9ba" />
        <rect x="54" y="55" width="33" height="33" fill="#a8adb0" />
        <g fill="#a9adb2" fontSize="18" textAnchor="middle">
          <text x="71" y="22">北</text>
          <text x="71" y="136">南</text>
          <text x="14" y="79">西</text>
          <text x="128" y="79">东</text>
        </g>
        <text x="71" y="80" fontSize="28" fontWeight="300" fill="#596068" textAnchor="middle">上</text>
      </svg>
      <button className="mt-4 flex h-[17px] w-[47px] items-center justify-between rounded-sm border border-[#9a9fa8] bg-[#858a95] px-1 text-[11px] leading-4 text-neutral-300">
        WCS
        <svg viewBox="0 0 8 6" className="h-[6px] w-2"><path d="M1 1h6L4 5z" fill="none" stroke="#bbb" /></svg>
      </button>
    </div>
  );
}

function NavBar() {
  return (
    <div className="absolute top-[212px] right-1 flex h-[212px] w-8 flex-col items-center justify-between rounded-sm border border-[#4b525b] bg-[#59616b] pt-4 pb-1 text-[#3b424c]">
      <svg viewBox="0 0 24 24" className="h-6 w-6">
        <circle cx="12" cy="12" r="10.500" fill="none" stroke="currentColor" />
        <circle cx="12" cy="12" r="5" fill="none" stroke="currentColor" />
      </svg>
      <Caret className="text-[#3b424c]" />
      <Hand className="h-6 w-6" strokeWidth={1} />
      <svg viewBox="0 0 24 24" className="h-6 w-6">
        <path d="M1 1l14 14M16 1L1 16M1 5V1h4M12 1h4v4M1 12v4h4" fill="none" stroke="currentColor" />
        <circle cx="16" cy="16" r="5" fill="#59616b" stroke="currentColor" />
        <path d="M20 19l4 4" stroke="currentColor" strokeWidth="2" />
      </svg>
      <Caret className="text-[#3b424c]" />
      <svg viewBox="0 0 24 24" className="h-6 w-6">
        <ellipse cx="12" cy="14" rx="10" ry="4" fill="none" stroke="currentColor" />
        <path d="M12 1l4 5h-2v15h-4V6H8z" fill="#59616b" stroke="currentColor" />
      </svg>
      <Caret className="text-[#3b424c]" />
      <svg viewBox="0 0 24 24" className="h-6 w-6">
        <path d="M1 1h6v6H1zM9 1h6v6H9zM17 1h6v6h-6zM1 9h16v14H1zM5 12h8v7H5z" fill="none" stroke="currentColor" />
        <path d="M7 13l5 3-5 3z" fill="currentColor" />
      </svg>
      <span className="mr-1 h-[7px] w-[7px] self-end rounded-full border border-current" />
    </div>
  );
}

function CommandLine() {
  return (
    <div className="mt-[2px] flex h-[55px] shrink-0 border-t border-[#777]">
      <div className="flex w-6 flex-col items-center justify-between bg-linear-to-b from-[#6a6a6a] to-[#3c3c3c] py-1 text-white">
        <Grip />
        <X className="h-3 w-3" strokeWidth={4} />
        <Wrench className="h-[14px] w-[14px] -scale-x-100" fill="currentColor" />
      </div>
      <div className="flex flex-1 flex-col text-xs text-black">
        <div className="flex h-8 items-end border-b border-[#777] bg-[#c8c8c8] pl-[2px] leading-[18px]">命令:</div>
        <label className="flex flex-1 items-center gap-1 bg-white pl-[5px]">
          <span className="flex h-[14px] w-[15px] items-center border border-[#aab] bg-[#dde] text-[10px] leading-3 text-[#445]">&gt;_</span>
          <Caret className="text-neutral-500" />
          <input placeholder="鍵入命令" aria-label="命令" className="flex-1 italic outline-none placeholder:text-neutral-400" />
        </label>
      </div>
    </div>
  );
}

function Tile({ label, children }) {
  return (
    <button className="flex w-[84px] flex-col items-center">
      <span className="flex h-[66px] w-[66px] items-center justify-center bg-black text-[8px] leading-[13px] font-semibold text-white">
        {children}
      </span>
      <span className="mt-[3px] h-[34px] text-[13px] leading-[17px]">{label}</span>
    </button>
  );
}

function Palette() {
  return (
    <aside className="ml-[3px] flex w-[220px] shrink-0 flex-col bg-[#484848] text-white">
      <div className="mt-[2px] h-6 bg-[#555] px-1" />
      <div className="flex flex-1">
        <div className="flex flex-1 flex-col bg-[#3c3c3c]">
          <div className="flex h-[15px] items-center border border-[#333] bg-[#484848] pl-[14px] text-neutral-500">
            <List className="mx-1 h-3 w-3" strokeWidth={3} />
            <span className="flex h-full w-5 items-center justify-center bg-[#333] text-neutral-400">
              <LayoutGrid className="h-[10px] w-[10px]" fill="currentColor" />
            </span>
            <svg viewBox="0 0 12 12" className="mx-1 h-3 w-3">
              <path d="M6 0a4 4 0 0 1 4 4c0 3-4 8-4 8S2 7 2 4a4 4 0 0 1 4-4zm0 2.500a1.500 1.500 0 1 0 .1 0z" fill="currentColor" fillRule="evenodd" />
            </svg>
          </div>
          <PaletteHead title="文字注记" className="bg-[#474747]" />
          <PaletteHead title="特殊注记" className="border-b border-[#2c2c2c] bg-[#373737]" />
          <div className="flex flex-wrap content-start pt-[9px] pl-[10px]">
            <Tile label="注记坐标">
              <span>
                <span className="block border-b border-white">x16585.83</span>
                <span className="block">y22137.14</span>
              </span>
            </Tile>
            <Tile label="注记坪高">
              <span className="w-10 pt-[2px] text-[10px] leading-3">
                <span className="block border-b border-white">34.56</span>
                <svg viewBox="0 0 40 8" className="h-2 w-10"><path d="M1 0l5 5 5-5" fill="none" stroke="#fff" /></svg>
              </span>
            </Tile>
            <Tile label="注记经纬度">
              <span>
                <span className="block border-b border-white">E00.00.00</span>
                <span className="block">N00.00.14</span>
              </span>
            </Tile>
            <Tile label="管道注记">
              <svg viewBox="0 0 40 4" className="h-1 w-10"><path d="M0 3h40M5 3V0M18 3V0M33 3V0" stroke="#fff" strokeWidth="1.500" /></svg>
            </Tile>
            <Tile label="距离标注">
              <span className="mb-2 w-10 border-b border-white text-[10px] leading-3">12.34</span>
            </Tile>
          </div>
          <span className="flex-1" />
          <PaletteHead title="常用文字" className="bg-[#474747]" />
          <span className="h-[5px] border-t border-[#333] bg-[#474747]" />
        </div>
        <div className="flex w-[29px] flex-col bg-[#484848] pt-[3px]">
          <span className="flex h-[11px] items-center"><Grip /></span>
          {paletteTabs.map((t, i) => (
            <button
              key={t}
              className={clsx(
                'flex h-16 items-center justify-center border-b border-[#2c2c2c] text-[13px] leading-[15px]',
                i === 0 ? 'bg-[#474747]' : 'border-t border-t-[#858585] bg-[#606060]'
              )}
            >
              <span className="w-[13px] break-all">{t}</span>
            </button>
          ))}
        </div>
      </div>
    </aside>
  );
}

function PaletteHead({ title, className }) {
  return (
    <button className={clsx('flex h-7 items-end text-[13px] leading-7', className)}>
      <span className="flex-1 pl-[14px]">{title}</span>
      <svg viewBox="0 0 6 6" className="h-[6px] w-[6px]"><path d="M6 0v6H0z" fill="#999" /></svg>
    </button>
  );
}

function StatusGroup({ children, className }) {
  return <div className={clsx('flex h-[26px] shrink-0 items-center justify-around border border-[#777] bg-[#484848]', className)}>{children}</div>;
}

function StatusIcon({ d, className = 'text-neutral-300', fill = 'none', width = 1.5 }) {
  return (
    <svg viewBox="0 0 18 18" className={clsx('h-[17px] w-[17px] shrink-0', className)} aria-hidden="true">
      <path d={d} fill={fill} stroke="currentColor" strokeWidth={width} />
    </svg>
  );
}

function StatusBar() {
  const person = 'M9 1l2 4-1 3 5 7-2 1-4-5-4 5-2-1 5-7-1-3z';
  return (
    <footer className="relative flex h-[29px] shrink-0 items-start bg-[#393939] text-xs text-white">
      <div className="flex pt-px pl-3 leading-[17px] text-neutral-400">
        <button className="h-[18px] w-[46px] rounded-b-lg bg-linear-to-b from-[#666] to-[#8a8a8a] font-bold text-white">模型</button>
        <button className="ml-[2px] h-[18px] w-[66px] rounded-b-lg bg-[#555]">Layout1</button>
        <button className="ml-[2px] h-[18px] w-[66px] rounded-b-lg bg-[#555]">Layout2</button>
        <button className="ml-[3px] h-[18px] w-[24px] rounded-b-lg bg-[#4c4c4c] text-sm leading-[16px] font-bold">+</button>
      </div>
      <span className="flex-1" />
      <div className="flex gap-px bg-[#5c5c5c] pt-[2px] whitespace-nowrap">
        <StatusGroup className="w-[71px]"><button>比例&nbsp; 1:500</button></StatusGroup>
        <StatusGroup className="w-[29px]"><button>模型</button></StatusGroup>
        <StatusGroup className="w-[65px]">
          <StatusIcon d="M4 1v16M8 1v16M12 1v16M1 4h16M1 8h16M1 12h16" width={1} />
          <svg viewBox="0 0 18 18" className="h-[17px] w-[17px] text-neutral-300">
            <path d="M2 2h15M2 6h15M2 10h15M2 14h15" stroke="currentColor" strokeDasharray="1 3" />
          </svg>
          <Caret />
        </StatusGroup>
        <StatusGroup className="w-[102px]">
          <StatusIcon d="M3 2v13h14M3 10h5v5" />
          <StatusIcon d="M16 9A7 7 0 1 1 9 2M9 9h8M9 9l5-6M14 4q4 5 0 10" className="text-[#3f94ff]" />
          <Caret />
          <StatusIcon d="M1 2l14 15M10 1v16" width={1} />
          <Caret />
        </StatusGroup>
        <StatusGroup className="w-[65px]">
          <StatusIcon d="M1 15h16M1 15L16 2M11 7q3 3 3 8" className="text-[#3f94ff]" />
          <svg viewBox="0 0 18 18" className="h-[17px] w-[17px]">
            <path d="M5 4h11v12H4V6" fill="none" stroke="#3f94ff" strokeWidth="1.500" />
            <path d="M1 1h6v6H1z" fill="#0b3d0b" stroke="#20c020" strokeWidth="1.500" />
          </svg>
          <Caret />
        </StatusGroup>
        <StatusGroup className="w-[107px]">
          <svg viewBox="0 0 18 18" className="h-[17px] w-[17px]">
            <path d={person} fill="#3f94ff" stroke="#3f94ff" strokeWidth="1.500" />
            <circle cx="13" cy="4" r="3" fill="none" stroke="#3f94ff" />
          </svg>
          <svg viewBox="0 0 18 18" className="h-[17px] w-[17px]">
            <path d={person} fill="#c8c8c8" stroke="#c8c8c8" />
            <path d="M14 0l-3 5h3l-2 4" fill="none" stroke="#ddd" strokeWidth="1.500" />
          </svg>
          <StatusIcon d={person} fill="#c8c8c8" width={1} />
          <button>1:1</button>
          <Caret />
        </StatusGroup>
        <StatusGroup className="w-[41px]">
          <Settings className="h-[14px] w-[14px] text-neutral-300" strokeWidth={4} />
          <Caret />
        </StatusGroup>
        <StatusGroup className="w-[25px]"><StatusIcon d="M9 1v16M1 9h16" /></StatusGroup>
        <StatusGroup className="w-[28px]"><StatusIcon d={person} width={1} /></StatusGroup>
        <StatusGroup className="w-[23px]">
          <StatusIcon d="M9 1a8 8 0 1 0 .1 0zM9 4v6l4 2" fill="#2a6fbe" className="text-[#1559a8]" />
        </StatusGroup>
        <StatusGroup className="w-[103px]">
          <svg viewBox="0 0 18 18" className="h-[17px] w-[17px]">
            <path d="M2 3h12v11H2z" fill="#ddd" />
            <path d="M12 8l6 10H7z" fill="#e8772a" />
          </svg>
          <svg viewBox="0 0 18 18" className="h-[17px] w-[17px]">
            <path d="M1 3h9v9H1z" fill="#4a83d8" />
            <path d="M4 10l4 5 9-11" stroke="#c9e33a" strokeWidth="3" fill="none" />
          </svg>
          <StatusIcon d="M2 3h14v12H2zM9 10h6M9 10l3-3" />
          <Menu className="h-[17px] w-[17px] text-neutral-200" />
        </StatusGroup>
      </div>
      <span className="pointer-events-none absolute -top-[4px] right-[10px] text-lg leading-7 whitespace-nowrap text-white/60 [text-shadow:1px_1px_2px_#0008]">CSDN @刘技哥GIS</span>
    </footer>
  );
}

function ImeBar() {
  return (
    <div className="absolute right-0 bottom-[84px] flex h-[27px] w-[202px] items-center text-[#0c6fd6]">
      <svg viewBox="0 0 32 32" className="-mt-1 h-[31px] w-[31px] shrink-0">
        <path d="M2 5Q1 3 4 3L24 0Q26 0 27 2L31 25Q31 28 28 28L9 32Q6 32 5 29Z" fill="#f0582a" />
        <path d="M23 9C20 5 9 7 10 12s13 2 13 8-11 6-14 3" stroke="#fff" strokeWidth="4" fill="none" />
      </svg>
      <div className="flex h-[26px] flex-1 items-center justify-around bg-white pl-1">
        <span className="text-[15px] font-bold">中</span>
        <span className="text-[15px] font-bold">°,</span>
        <Mic className="h-4 w-4" fill="currentColor" />
        <svg viewBox="0 0 16 14" className="h-[14px] w-4">
          <path d="M1 1h14v12H1z" fill="none" stroke="currentColor" strokeWidth="1.500" />
          <path d="M3 4h10M3 7h10" stroke="currentColor" strokeWidth="2" strokeDasharray="2 1" />
          <path d="M4 10h8" stroke="currentColor" strokeWidth="1.500" />
        </svg>
        <Shirt className="h-4 w-4" fill="currentColor" />
        <LayoutGrid className="h-4 w-4" fill="currentColor" />
        <Settings className="h-4 w-4" strokeWidth={3} />
      </div>
    </div>
  );
}

export default function App() {
  return (
    <div className="relative flex h-screen flex-col overflow-hidden bg-[#5c5c5c] [font-family:'Noto_Sans','Noto_Sans_CJK_SC',sans-serif]">
      <Header />
      <FileTabs />
      <TopToolbar />
      <div className="flex min-h-0 flex-1">
        <LayerPanel />
        <main className="ml-px flex min-w-0 flex-1 flex-col">
          <div className="flex min-h-0 flex-1">
            <LeftToolbar />
            <section className="relative ml-1 min-w-0 flex-1 overflow-hidden bg-[#20282f]">
              <Drawing />
              <p className="absolute top-[5px] left-1 text-xs leading-[18px] text-neutral-200">[−][俯视][二维线框]</p>
              <ViewCube />
              <NavBar />
            </section>
            <RightToolbar />
          </div>
          <CommandLine />
        </main>
        <Palette />
      </div>
      <StatusBar />
      <ImeBar />
    </div>
  );
}
